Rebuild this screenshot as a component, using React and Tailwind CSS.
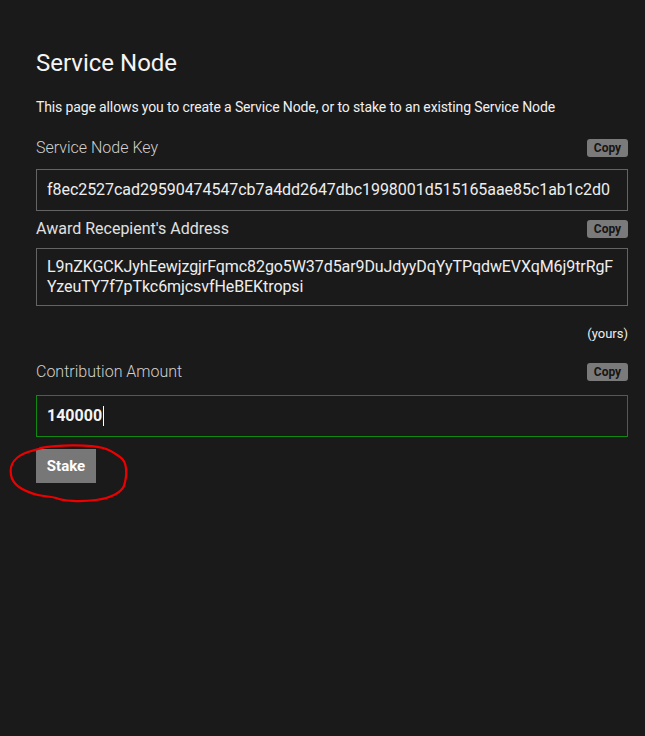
export default function App() {
  const CopyBtn = () => (
    <button className="h-[18px] w-[41px] rounded-[3px] bg-[#7a7a7a] text-[12px] font-bold leading-[18px] text-[#151515]">
      Copy
    </button>
  );
  return (
    <div
      className="min-h-[736px] w-full bg-[#1a1a1a] pl-9 pr-[17px] pt-[47px] text-[#eeeeee]"
      style={{ fontFamily: "Roboto, 'Liberation Sans', sans-serif" }}
    >
      <h1 className="text-[24px] leading-8 text-[#f4f4f4]">Service Node</h1>
      <p className="mt-[18px] text-[14px] leading-5 tracking-[-0.13px] text-[#f0f0f0]">
        This page allows you to create a Service Node, or to stake to an existing Service Node
      </p>

      <div className="mt-[21px] flex h-5 items-center justify-between">
        <span className="text-[16px] font-light text-[#d0d0d0]">Service Node Key</span>
        <CopyBtn />
      </div>
      <div className="mt-[11px] flex h-[42px] items-center border border-[#646464] px-[10px] text-[16px] tracking-[-0.05px] text-[#eeeeee]">
        f8ec2527cad29590474547cb7a4dd2647dbc1998001d515165aae85c1ab1c2d0
      </div>

      <div className="mt-2 flex h-5 items-center justify-between">
        <span className="text-[16px] text-[#e0e0e0]">Award Recepient's Address</span>
        <CopyBtn />
      </div>
      <div className="mt-[9px] break-all border border-[#646464] px-[10px] py-2 text-[16px] leading-5 tracking-[-0.08px] text-[#eeeeee]">
        L9nZKGCKJyhEewjzgjrFqmc82go5W37d5ar9DuJdyyDqYyTPqdwEVXqM6j9trRgFYzeuTY7f7pTkc6mjcsvfHeBEKtropsi
      </div>

      <div className="mt-[18px] text-right text-[13px] leading-5 text-[#eeeeee]">(yours)</div>

      <div className="mt-[18px] flex h-5 items-center justify-between">
        <span className="text-[16px] font-light text-[#d0d0d0]">Contribution Amount</span>
        <CopyBtn />
      </div>
      <div className="mt-[13px] flex h-[42px] items-center border border-[#118811] px-[10px] text-[16px] font-bold text-[#f4f4f4]">
        140000
        <span className="ml-[1px] inline-block h-5 w-px bg-white" />
      </div>

      <div className="relative mt-3 w-[60px]">
        <button className="h-[34px] w-[60px] bg-[#777777] text-[15px] font-bold text-white">
          Stake
        </button>
        <svg
          className="pointer-events-none absolute left-[-28px] top-[-5px]"
          width="120"
          height="60"
          viewBox="0 0 120 60"
          fill="none"
        >
          <path
            d="M32 4 C 50 1, 80 0, 95 4 C 103 6, 106 9, 112 13 C 120 18, 119 32, 116 42 C 112 50, 102 54, 88 56 C 72 58, 55 57, 48 54 C 42 52, 38 53, 30 51 C 18 48, 5 43, 3 31 C 1 20, 8 12, 20 8 C 26 6, 30 5, 38 3"
            stroke="#ee0000"
            strokeWidth="2.2"
            strokeLinecap="round"
          />
        </svg>
      </div>
    </div>
  );
}
